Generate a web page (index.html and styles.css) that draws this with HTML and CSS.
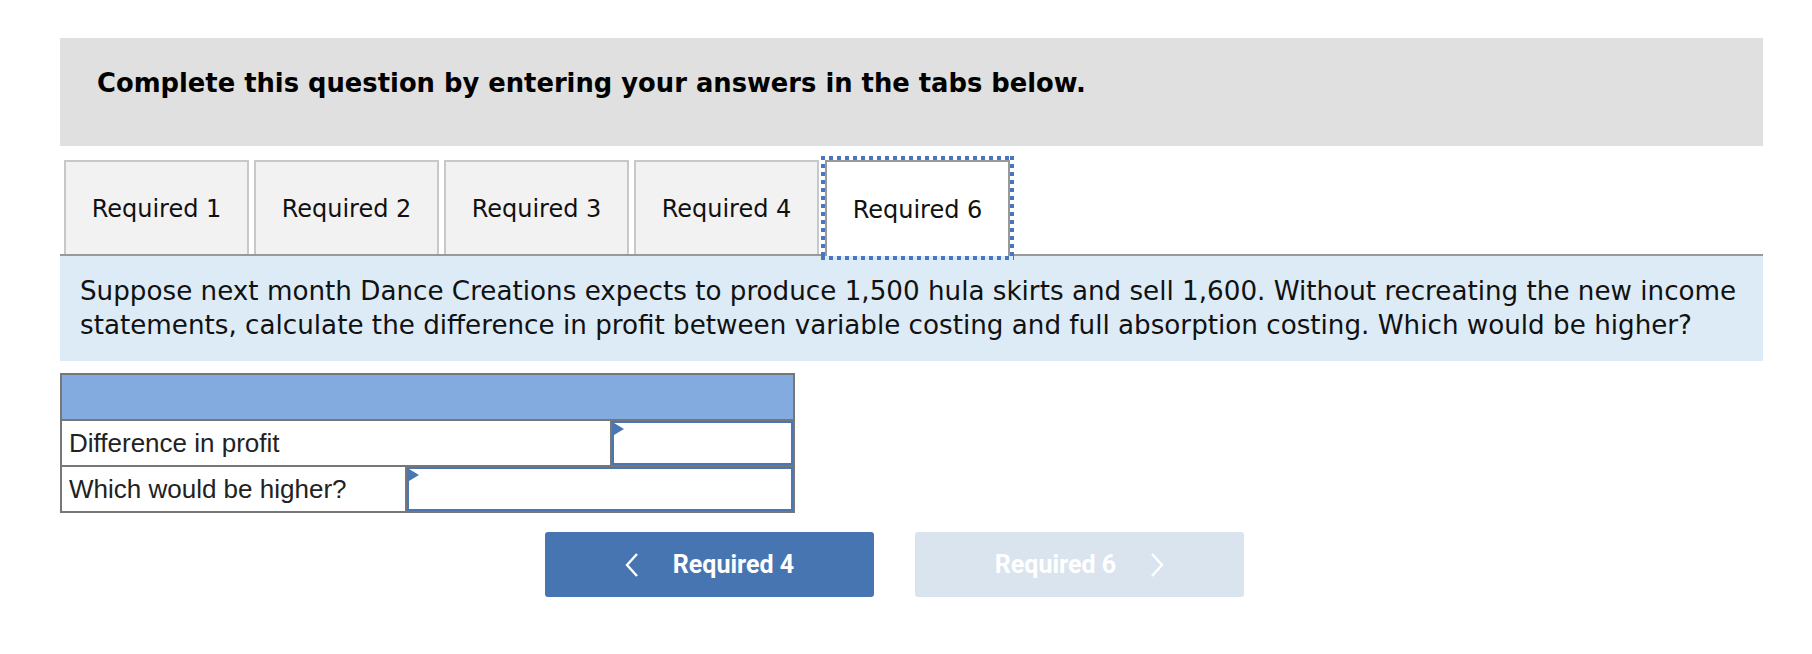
FILE: index.html
```html
<!DOCTYPE html>
<html lang="en">
<head>
    <meta charset="UTF-8">
    <title>Required 6</title>
    <link rel="stylesheet" href="styles.css">
</head>
<body>
    <div class="page">
        <div class="prompt">Complete this question by entering your answers in the tabs below.</div>

        <!-- Tabs -->
        <div class="tabs">
            <div class="tab">Required 1</div>
            <div class="tab">Required 2</div>
            <div class="tab">Required 3</div>
            <div class="tab">Required 4</div>
            <div class="tab active">Required 6</div>
        </div>

        <div class="question">
            Suppose next month Dance Creations expects to produce 1,500 hula skirts and sell 1,600. Without recreating the new income<br>
            statements, calculate the difference in profit between variable costing and full absorption costing. Which would be higher?
        </div>

        <!-- Answer table -->
        <div class="answer-table">
            <div class="answer-head"></div>
            <div class="answer-row">
                <div class="answer-label wide">Difference in profit</div>
                <div class="answer-input"></div>
            </div>
            <div class="answer-row">
                <div class="answer-label narrow">Which would be higher?</div>
                <div class="answer-input"></div>
            </div>
        </div>

        <div class="nav">
            <div class="nav-btn prev">
                <svg width="14" height="26" viewBox="0 0 14 26"><polyline points="12,2 2,13 12,24" fill="none" stroke="#fff" stroke-width="2.4"/></svg>
                <span>Required 4</span>
            </div>
            <div class="nav-btn next">
                <span>Required 6</span>
                <svg width="14" height="26" viewBox="0 0 14 26"><polyline points="2,2 12,13 2,24" fill="none" stroke="#fff" stroke-width="2.4"/></svg>
            </div>
        </div>
    </div>
</body>
</html>
```

FILE: styles.css
```css
* {
    box-sizing: border-box;
    margin: 0;
    padding: 0;
}

body {
    background: #fff;
    color: #111;
    font-family: "DejaVu Sans", Verdana, sans-serif;
}

.page {
    width: 1763px;
    padding-left: 60px;
    padding-top: 38px;
}

.prompt {
    background: #e0e0e0;
    height: 108px;
    padding: 30px 37px 0;
    font-size: 25.8px;
    font-weight: bold;
    line-height: 30px;
    color: #000;
}

/* Tabs */
.tabs {
    display: flex;
    gap: 5px;
    margin-top: 14px;
    padding-left: 4px;
    border-bottom: 2px solid #999;
}

.tab {
    width: 185px;
    height: 94px;
    display: flex;
    align-items: center;
    justify-content: center;
    padding-top: 2px;
    background: #f2f2f2;
    border: 2px solid #c8c8c8;
    border-bottom: none;
    font-size: 24px;
    color: #111;
}

.tab.active {
    position: relative;
    margin-left: 1px;
    background: #fff;
    border-color: #999;
    height: 96px;
    margin-bottom: -2px;
}

.tab.active::before {
    content: "";
    position: absolute;
    top: -6px;
    left: -6px;
    right: -6px;
    bottom: -4px;
    background:
        repeating-linear-gradient(90deg, #4a76c0 0 4px, transparent 4px 8px) top / 100% 4px no-repeat,
        repeating-linear-gradient(90deg, #4a76c0 0 4px, transparent 4px 8px) bottom / 100% 4px no-repeat,
        repeating-linear-gradient(180deg, #4a76c0 0 4px, transparent 4px 8px) left / 4px 100% no-repeat,
        repeating-linear-gradient(180deg, #4a76c0 0 4px, transparent 4px 8px) right / 4px 100% no-repeat;
}

.question {
    background: #ddebf7;
    padding: 19px 20px 19px;
    font-size: 26.2px;
    line-height: 33.5px;
    white-space: nowrap;
    color: #111;
}

/* Answer table */
.answer-table {
    width: 735px;
    margin-top: 12px;
    border: 2px solid #777;
    font-family: "Liberation Sans", Arial, sans-serif;
    font-size: 26px;
    color: #222;
}

.answer-head {
    height: 46px;
    background: #84abdf;
    border-bottom: 2px solid #777;
}

.answer-row {
    display: flex;
    height: 46px;
    border-bottom: 2px solid #777;
}

.answer-row:last-child {
    height: 44px;
    border-bottom: none;
}

.answer-label {
    display: flex;
    align-items: center;
    padding-left: 7px;
    padding-top: 1px;
    border-right: 2px solid #777;
}

.answer-label.wide {
    width: 550px;
}

.answer-label.narrow {
    width: 345px;
}

.answer-input {
    flex: 1;
    position: relative;
    border: 2px solid #4a76b3;
    background: #fff;
}

.answer-input::before {
    content: "";
    position: absolute;
    top: 0;
    left: 0;
    border-left: 10px solid #4a76b3;
    border-top: 6px solid transparent;
    border-bottom: 6px solid transparent;
}

/* Prev / next buttons */
.nav {
    display: flex;
    gap: 41px;
    margin-top: 19px;
    padding-left: 485px;
}

.nav-btn {
    width: 329px;
    height: 65px;
    display: flex;
    align-items: center;
    justify-content: center;
    gap: 34px;
    border-radius: 3px;
    font-family: Roboto, "Open Sans", sans-serif;
    font-weight: bold;
    font-size: 25px;
    color: #fff;
}

.nav-btn.prev {
    background: #4775b2;
}

.nav-btn.next {
    background: #dae4ef;
}
```
